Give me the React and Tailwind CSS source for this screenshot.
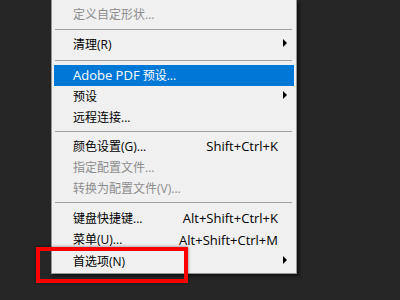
import React from "react";

const font = { fontFamily: '"Open Sans", "Noto Sans CJK SC", sans-serif' };

function Item({ label, shortcut, arrow, disabled, active, h = "h-[21px]" }) {
  return (
    <div
      className={`relative flex items-center mx-[2px] pl-[19px] pr-[16px] ${h} ${
        active ? "bg-[#0078d7] text-white" : disabled ? "text-[#8d8d8d]" : "text-black"
      }`}
    >
      <span className="flex-1 whitespace-nowrap">{label}</span>
      {shortcut && <span className="whitespace-nowrap text-[13px]">{shortcut}</span>}
      {arrow && (
        <span className="absolute right-[7px] top-1/2 -translate-y-[6px] w-0 h-0 border-l-[4px] border-l-black border-y-[4px] border-y-transparent" />
      )}
    </div>
  );
}

function Sep({ h = "h-[9px]", pt = "pt-[4px]" }) {
  return (
    <div className={`${h} ${pt} ml-[3px] mr-[4px]`}>
      <div className="h-px bg-[#a0a0a0]" />
    </div>
  );
}

export default function App() {
  return (
    <div className="relative w-[400px] h-[300px] bg-[#262626] overflow-hidden" style={font}>
      <div className="ml-[51px] w-[246px] bg-[#f0f0f0] border-x border-b border-[#979797] shadow-[2px_2px_3px_rgba(0,0,0,0.6)] text-[12px] leading-none">
        <Item label="定义自定形状..." disabled h="h-[25px] pt-[4px]" />
        <Sep />
        <Item label="清理(R)" arrow h="h-[22px]" />
        <Sep />
        <Item
          label={
            <>
              <span className="text-[13px]">Adobe PDF</span> 预设...
            </>
          }
          active
        />
        <Item label="预设" arrow />
        <Item label="远程连接..." />
        <Sep h="h-[8px]" pt="pt-[3px]" />
        <Item label="颜色设置(G)..." shortcut="Shift+Ctrl+K" />
        <Item label="指定配置文件..." disabled />
        <Item label="转换为配置文件(V)..." disabled />
        <Sep h="h-[9px]" pt="pt-[3px]" />
        <Item label="键盘快捷键..." shortcut="Alt+Shift+Ctrl+K" />
        <Item label="菜单(U)..." shortcut="Alt+Shift+Ctrl+M" h="h-[22px]" />
        <Item label="首选项(N)" arrow h="h-[22px]" />
      </div>
      <div className="absolute left-[36px] top-[247px] w-[152px] h-[36px] border-4 border-[#ff0000] shadow-[0_0_3px_rgba(0,0,0,0.5)]" />
    </div>
  );
}
